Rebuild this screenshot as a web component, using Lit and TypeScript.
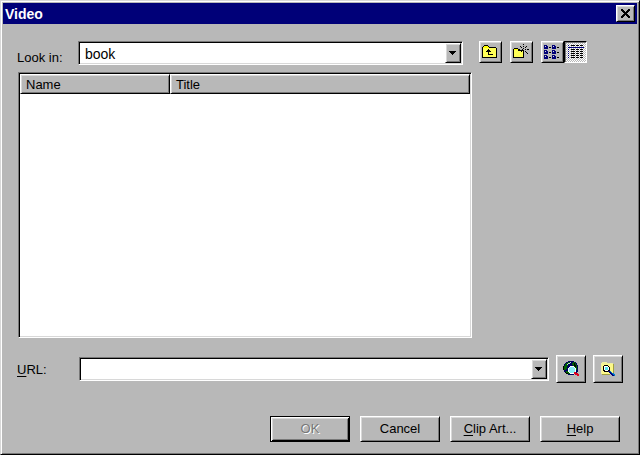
import { LitElement, html, css, svg } from "lit";
import { customElement, property } from "lit/decorators.js";

const dots = (cells: string[], x: number, y: number, fill: string) =>
  cells.flatMap((row, j) =>
    [...row].map((c, i) =>
      c === "#" ? svg`<rect x=${x + i} y=${y + j} width="1" height="1" fill=${fill}></rect>` : ""
    )
  );

const icons: Record<string, unknown> = {
  up: svg`
    <path d="M1 4h13v9H1z" fill="#ffff58"></path>
    <path d="M2 2h4v1H2zM1 3h6v1H1z" fill="#ff0"></path>
    <path d="M2 1h4v1H2zM1 2h1v1H1zM6 2h1v1H6zM0 3h1v10H0zM7 3h7v1H7zM14 4h1v9h-1zM0 13h15v1H0z" fill="#000"></path>
    <path d="M6 5h1v1h1v1h1v1H7v2h4v1H6V8H4V7h1V6h1z" fill="#000"></path>`,
  create: svg`
    <path d="M1 6h9v7H1z" fill="#ffff58"></path>
    <path d="M1 5h4v1H1z" fill="#ff0"></path>
    <path d="M1 4h4v1H1zM0 5h1v8H0zM5 5h1v1H5zM5 6h6v1H5zM10 6h1v7h-1zM0 13h11v1H0z" fill="#000"></path>
    ${dots(
      [
        "....#.....",
        "..........",
        ".#..#..#..",
        "..#...#...",
        "....#.....",
        "#..#..#.##",
        "....#.....",
        "..#...#...",
        "....#..#..",
        "....#...#.",
      ],
      6, 0, "#000"
    )}`,
  list: svg`
    ${[1, 6, 11].map((y) =>
      [0, 8].map(
        (x) => svg`
        <path d=${`M${x} ${y}h3v1h1v3h-4z`} fill="#000078"></path>
        <path d=${`M${x + 1} ${y + 1}h1v1h-1z`} fill="#d8d8d8"></path>
        <path d=${`M${x + 5} ${y + 2}h2v1h-2z`} fill="#000"></path>`
      )
    )}`,
  details: svg`
    <path d="M1 3h16v1H1z" fill="#000078"></path>
    ${[1, 5, 7, 9, 11, 13].map(
      (y) => svg`
      <path d=${`M1 ${y}h1v1h-1z`} fill="#000078"></path>
      <path d=${`M4 ${y}h4v1h-4zM9 ${y}h3v1h-3zM13 ${y}h3v1h-3z`} fill="#000"></path>`
    )}`,
  web: svg`
    <path d="M5 0h6v1h2v1h1v2h1v7h-1v1h-1v1h-2v1H5v-1H3v-1H2v-1H1v-2H0V5h1V3h1V2h1V1h2z" fill="#000060"></path>
    <path d="M5 1h2v1H6v1H5v2H4v3H3v1H1V5h1V3h1V2h2zM10 1h2v1h1v2h1v5h-2V6h-2V4H9V2h1zM3 10h3v2h2v1H5v-1H3z" fill="#006000"></path>
    <path d="M11 2h1v2h1v2h-1V5h-1zM0 5h1v4H0zM2 11h1v1h2v1H3v-1H2z" fill="#000"></path>
    <path d="M5 2h2v1H5zM4 3h1v1H4zM7 1h1v1H7z" fill="#b8d8d8"></path>
    <path d="M7 5h4v1h1v1h1v4h-1v1h-1v1H7v-1H6v-1H5V7h1V6h1z" fill="#fff"></path>
    <path d="M7 6h4v1h1v4h-1v1H7v-1H6V7h1z" fill="#88ecf4"></path>
    <path d="M11 11h2v1h2v1h1v2h-2v-1h-2v-1h-1z" fill="#e00020"></path>`,
  browse: svg`
    <path d="M1 3h13v10H1z" fill="#fcf888"></path>
    <path d="M1 2h1v11H1zM2 1h5v1H2zM2 2h6v1H2zM8 2h5v1H8z" fill="#f0f0a0"></path>
    <path d="M13 3h1v10h-1zM2 13h8v1H2z" fill="#a0a040"></path>
    <path d="M4 4h4v1h1v1h1v4H9v1H4v-1H3V5h1z" fill="#000"></path>
    <path d="M4 5h4v1h1v3H8v1H5V9H4z" fill="#fff"></path>
    <path d="M5 6h3v3H5z" fill="#58e4f0"></path>
    <path d="M8 10h2v1h1v1h1v1h2v2h-2v-1h-1v-1h-1v-1H9v-1H8z" fill="#000078"></path>
    <path d="M10 10h1v1h1v1h2v1h1v2h-1v-1h-1v-1h-1v-1h-1v-1h-1z" fill="#0078c8"></path>`,
};

@customElement("pixel-icon")
export class PixelIcon extends LitElement {
  @property() name = "up";
  @property({ type: Number }) cols = 17;
  static styles = css`
    :host, svg { display: block; }
  `;
  render() {
    return html`<svg width=${this.cols} height="16" viewBox="0 0 ${this.cols} 16" shape-rendering="crispEdges" aria-hidden="true">${icons[this.name]}</svg>`;
  }
}

@customElement("app-root")
export class AppRoot extends LitElement {
  static styles = css`
    :host {
      display: block;
      font: 13px/16px "Liberation Sans", Arial, sans-serif;
      color: #000;
    }
    * { box-sizing: border-box; }
    .window {
      display: flex;
      flex-direction: column;
      min-height: 100vh;
      padding: 1px;
      background: #b8b8b8;
      border: 1px solid;
      border-color: #d8d8d8 #000 #000 #d8d8d8;
      box-shadow: inset 1px 1px #fff, inset -1px -1px #787878;
    }
    .titlebar {
      display: flex;
      align-items: center;
      justify-content: space-between;
      height: 21px;
      margin: 1px 1px 0;
      padding: 0 2px;
      background: #000078;
      color: #fff;
    }
    h1 { margin: 0; font: bold 14px/20px "Liberation Sans", Arial, sans-serif; }
    button, input, select { font: inherit; color: inherit; margin: 0; border-radius: 0; }
    button {
      display: flex;
      align-items: center;
      justify-content: center;
      flex: none;
      padding: 0;
      background: #b8b8b8;
      border: 1px solid;
      border-color: #fff #000 #000 #fff;
      box-shadow: inset 1px 1px #d8d8d8, inset -1px -1px #787878;
    }
    .close { width: 19px; height: 17px; }
    .content {
      display: flex;
      flex-direction: column;
      flex: 1;
      padding: 17px 15px 11px 16px;
    }
    .row { display: flex; align-items: flex-start; }
    .label { flex: none; width: 61px; padding: 9px 0 0; margin-left: -1px; }
    .sunken {
      background: #fff;
      border: 1px solid;
      border-color: #787878 #fff #fff #787878;
      box-shadow: inset 1px 1px #000, inset -1px -1px #d8d8d8;
    }
    .combo { display: flex; flex: 1; height: 24px; padding: 1px; }
    .combo select, .combo input {
      flex: 1;
      min-width: 0;
      height: 19px;
      border: 0;
      margin: 1px 0 0 1px;
      padding: 0 4px;
      outline: 0;
      appearance: none;
      background: #fff;
      font-size: 14px;
    }
    .drop { width: 16px; height: 20px; }
    .arrow { display: block; width: 7px; height: 4px; margin-right: 1px; }
    .tools { display: flex; flex: none; width: 160px; padding-left: 16px; }
    .tool { width: 23px; height: 22px; margin-right: 8px; }
    .joined { margin-right: 0; }
    .pressed {
      border-color: #000 #fff #fff #000;
      box-shadow: inset 1px 1px #787878;
      background: repeating-conic-gradient(#fff 0 25%, #b8b8b8 0 50%) 0 0 / 2px 2px;
    }
    .files { flex: 1; min-height: 160px; margin: 6px 151px 0 0; padding: 1px; }
    table { width: 100%; border-collapse: separate; border-spacing: 0; table-layout: fixed; }
    th {
      height: 20px;
      padding: 1px 5px 0;
      text-align: left;
      font-weight: normal;
      background: #b8b8b8;
      border: 1px solid;
      border-color: #fff #000 #000 #fff;
      box-shadow: inset 1px 1px #d8d8d8, inset -1px -1px #787878;
    }
    .name { width: 150px; }
    .url { margin-top: 19px; }
    .url .label { padding-top: 5px; width: 62px; }
    .pick { width: 30px; height: 28px; margin: -2px 0 0 7px; }
    .actions { display: flex; justify-content: flex-end; gap: 10px; padding: 33px 3px 0 0; }
    .action { width: 80px; height: 26px; }
    .action:disabled {
      color: #787878;
      text-shadow: 1px 1px #fff;
      border-color: #000;
      box-shadow: inset 1px 1px #fff, inset -1px -1px #000, inset 2px 2px #d8d8d8, inset -2px -2px #787878;
    }
    .mnemonic { text-decoration: underline; text-underline-offset: 2px; }
  `;

  private arrow() {
    return html`<svg class="arrow" viewBox="0 0 7 4" shape-rendering="crispEdges" aria-hidden="true">
      <path d="M0 0h7v1H6v1H5v1H4v1H3V3H2V2H1V1H0z"></path>
    </svg>`;
  }

  render() {
    return html`
      <main class="window">
        <header class="titlebar">
          <h1>Video</h1>
          <button class="close" aria-label="Close">
            <svg width="9" height="9" viewBox="0 0 9 9" shape-rendering="crispEdges" aria-hidden="true">
              ${dots(
                [
                  "##.....##",
                  "###...###",
                  ".###.###.",
                  "..#####..",
                  "...###...",
                  "..#####..",
                  ".###.###.",
                  "###...###",
                  "##.....##",
                ],
                0, 0, "#000"
              )}
            </svg>
          </button>
        </header>
        <div class="content">
          <div class="row">
            <label class="label" for="folder">Look in:</label>
            <div class="combo sunken">
              <select id="folder"><option>book</option></select>
              <button class="drop" aria-label="Show folders" tabindex="-1">${this.arrow()}</button>
            </div>
            <div class="tools">
              <button class="tool" aria-label="Up one level"><pixel-icon name="up"></pixel-icon></button>
              <button class="tool" aria-label="Create new folder"><pixel-icon name="create"></pixel-icon></button>
              <button class="tool joined" aria-label="List" aria-pressed="false"><pixel-icon name="list"></pixel-icon></button>
              <button class="tool joined pressed" aria-label="Details" aria-pressed="true"><pixel-icon name="details"></pixel-icon></button>
            </div>
          </div>
          <div class="files sunken">
            <table>
              <thead><tr><th class="name" scope="col">Name</th><th scope="col">Title</th></tr></thead>
              <tbody></tbody>
            </table>
          </div>
          <div class="row url">
            <label class="label" for="url"><span class="mnemonic">U</span>RL:</label>
            <div class="combo sunken">
              <input id="url" type="text" />
              <button class="drop" aria-label="Recent addresses" tabindex="-1">${this.arrow()}</button>
            </div>
            <button class="pick" aria-label="Search the web"><pixel-icon name="web" cols="16"></pixel-icon></button>
            <button class="pick" aria-label="Browse files"><pixel-icon name="browse" cols="16"></pixel-icon></button>
          </div>
          <div class="actions">
            <button class="action" disabled>OK</button>
            <button class="action">Cancel</button>
            <button class="action"><span><span class="mnemonic">C</span>lip Art...</span></button>
            <button class="action"><span><span class="mnemonic">H</span>elp</span></button>
          </div>
        </div>
      </main>
    `;
  }
}
